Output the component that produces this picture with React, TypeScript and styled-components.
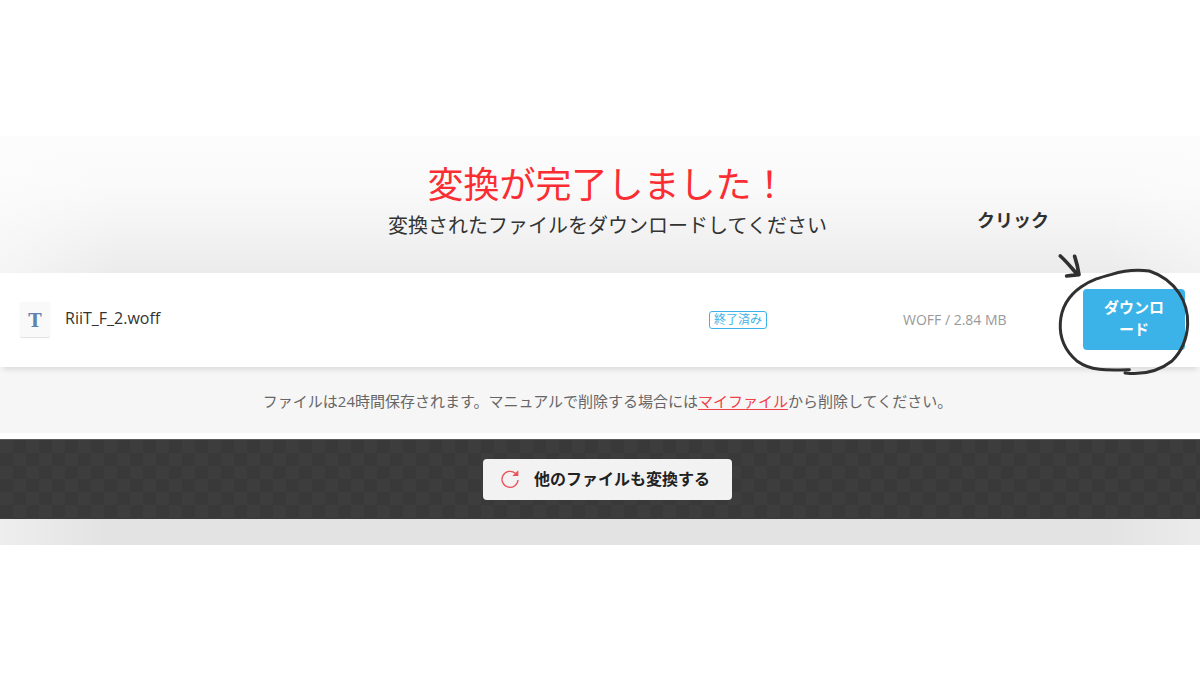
import React from 'react';
import styled, { createGlobalStyle } from 'styled-components';

const GlobalStyle = createGlobalStyle`
  *, *::before, *::after { box-sizing: border-box; }
  body {
    margin: 0;
    background: #ffffff;
    color: #333333;
    font-family: 'Open Sans', 'Noto Sans CJK JP', sans-serif;
  }
`;

const Page = styled.main`
  padding-top: 136px;
  overflow-x: hidden;
`;

const Hero = styled.header`
  padding: 27px 0 31px 15px;
  text-align: center;
  background:
    linear-gradient(90deg, rgba(252, 252, 252, 0.6), transparent 10%, transparent 92%, rgba(252, 252, 252, 0.4)),
    linear-gradient(#fcfcfc, #fafafa 35%, #f5f5f5 60%, #ebebeb);
`;

const Title = styled.h1`
  margin: 0;
  font-size: 36px;
  line-height: 44px;
  font-weight: 400;
  color: #fa2d33;
`;

const Subtitle = styled.p`
  margin: 0;
  padding-top: 3px;
  font-size: 20px;
  line-height: 32px;
`;

const FileRow = styled.section`
  position: relative;
  display: grid;
  grid-template-columns: 689fr 194fr 180fr 102px;
  align-items: center;
  padding: 16px 15px 17px 20px;
  background: #ffffff;
  box-shadow: 0 6px 5px -3px rgba(0, 0, 0, 0.1);
`;

const FileCell = styled.div`
  display: flex;
  align-items: center;
  gap: 15px;
`;

const FileIcon = styled.span`
  display: grid;
  place-items: center;
  width: 30px;
  height: 35px;
  padding-top: 2px;
  border-radius: 2px;
  background: #f9f9f9;
  box-shadow: 0 1px 1px rgba(0, 0, 0, 0.12);
  font: 700 18px 'DejaVu Serif', serif;
  color: #5f82ae;
`;

const FileName = styled.span`
  padding-bottom: 4px;
  font-size: 16px;
  line-height: 24px;
`;

const Badge = styled.span`
  justify-self: start;
  padding: 0 4px;
  border: 1px solid #3bb3e8;
  border-radius: 3px;
  font-size: 12px;
  line-height: 16px;
  color: #3bb3e8;
`;

const Meta = styled.span`
  font-size: 14px;
  line-height: 20px;
  color: #999999;
`;

const DownloadCell = styled.div`
  position: relative;
`;

const DownloadButton = styled.button`
  display: block;
  width: 100%;
  padding: 7px 20px 10px;
  border: 0;
  border-radius: 4px;
  background: #3bb3e9;
  color: #ffffff;
  font-family: inherit;
  font-size: 15px;
  font-weight: 700;
  line-height: 22px;
  word-break: break-all;
  cursor: pointer;
`;

const Doodle = styled.svg`
  position: absolute;
  top: -98px;
  left: -123px;
  width: 240px;
  height: 200px;
  pointer-events: none;
  fill: none;
  stroke: #303030;
  stroke-linecap: round;
  stroke-linejoin: round;
`;

const DoodleLabel = styled.span`
  position: absolute;
  top: -85px;
  left: -106px;
  font-size: 18px;
  font-weight: 700;
  line-height: 32px;
  white-space: nowrap;
  color: #303030;
  pointer-events: none;
`;

const Note = styled.p`
  margin: 0;
  padding: 23px 0 20px 15px;
  border-bottom: 6px solid #ffffff;
  background: #f6f6f6;
  text-align: center;
  font-size: 15px;
  line-height: 23px;
  color: #666666;
`;

const NoteLink = styled.a`
  color: #f04048;
  text-decoration: underline;
  text-underline-offset: 2px;
`;

const ActionBar = styled.div`
  display: flex;
  justify-content: center;
  padding: 19px 0 19px 15px;
  border-top: 1px solid #5a5a5a;
  background: repeating-conic-gradient(#393939 0 25%, #3d3d3d 0 50%) 0 0 / 26px 26px;
`;

const AgainButton = styled.button`
  display: flex;
  align-items: center;
  gap: 14px;
  padding: 8px 22px 9px 17px;
  border: 0;
  border-radius: 4px;
  background: #f2f2f2;
  color: #222222;
  font-family: inherit;
  font-size: 16px;
  font-weight: 700;
  line-height: 24px;
  cursor: pointer;
`;

const Shade = styled.footer`
  height: 26px;
  background:
    linear-gradient(90deg, rgba(255, 255, 255, 0.4), transparent 9%, transparent 92%, rgba(255, 255, 255, 0.3)),
    #e3e3e3;
`;

const ReloadIcon = () => (
  <svg width="20" height="20" viewBox="0 0 60 60" fill="none" stroke="#ee4f5a" strokeWidth="4" aria-hidden="true">
    <path d="M54 33A24 24 0 1 1 46 13" />
    <path d="M55 4V21H37Z" fill="#ee4f5a" stroke="none" />
  </svg>
);

export default function App() {
  return (
    <>
      <GlobalStyle />
      <Page lang="ja">
        <Hero>
          <Title>変換が完了しました！</Title>
          <Subtitle>変換されたファイルをダウンロードしてください</Subtitle>
        </Hero>
        <FileRow>
          <FileCell>
            <FileIcon>T</FileIcon>
            <FileName>RiiT_F_2.woff</FileName>
          </FileCell>
          <Badge>終了済み</Badge>
          <Meta>WOFF / 2.84 MB</Meta>
          <DownloadCell>
            <DownloadButton type="button">ダウンロード</DownloadButton>
            <DoodleLabel>クリック</DoodleLabel>
            <Doodle viewBox="0 0 720 600" aria-hidden="true">
              <path
                strokeWidth="9"
                d="M508 536C440 538 392 540 352 511C315 480 298 440 301 395C304 350 327 313 363 288C397 265 425 258 455 250C490 239 530 235 568 240C605 252 638 278 657 306C676 334 684 365 683 400C681 440 668 478 636 510C600 538 553 553 495 546"
              />
              <path strokeWidth="11" d="M301 195C320 212 335 231 352 250M344 196C350 214 354 232 357 251C345 252 333 253 320 255" />
            </Doodle>
          </DownloadCell>
        </FileRow>
        <Note>
          ファイルは24時間保存されます。マニュアルで削除する場合には<NoteLink href="#my-files">マイファイル</NoteLink>から削除してください。
        </Note>
        <ActionBar>
          <AgainButton type="button">
            <ReloadIcon />
            他のファイルも変換する
          </AgainButton>
        </ActionBar>
        <Shade />
      </Page>
    </>
  );
}
